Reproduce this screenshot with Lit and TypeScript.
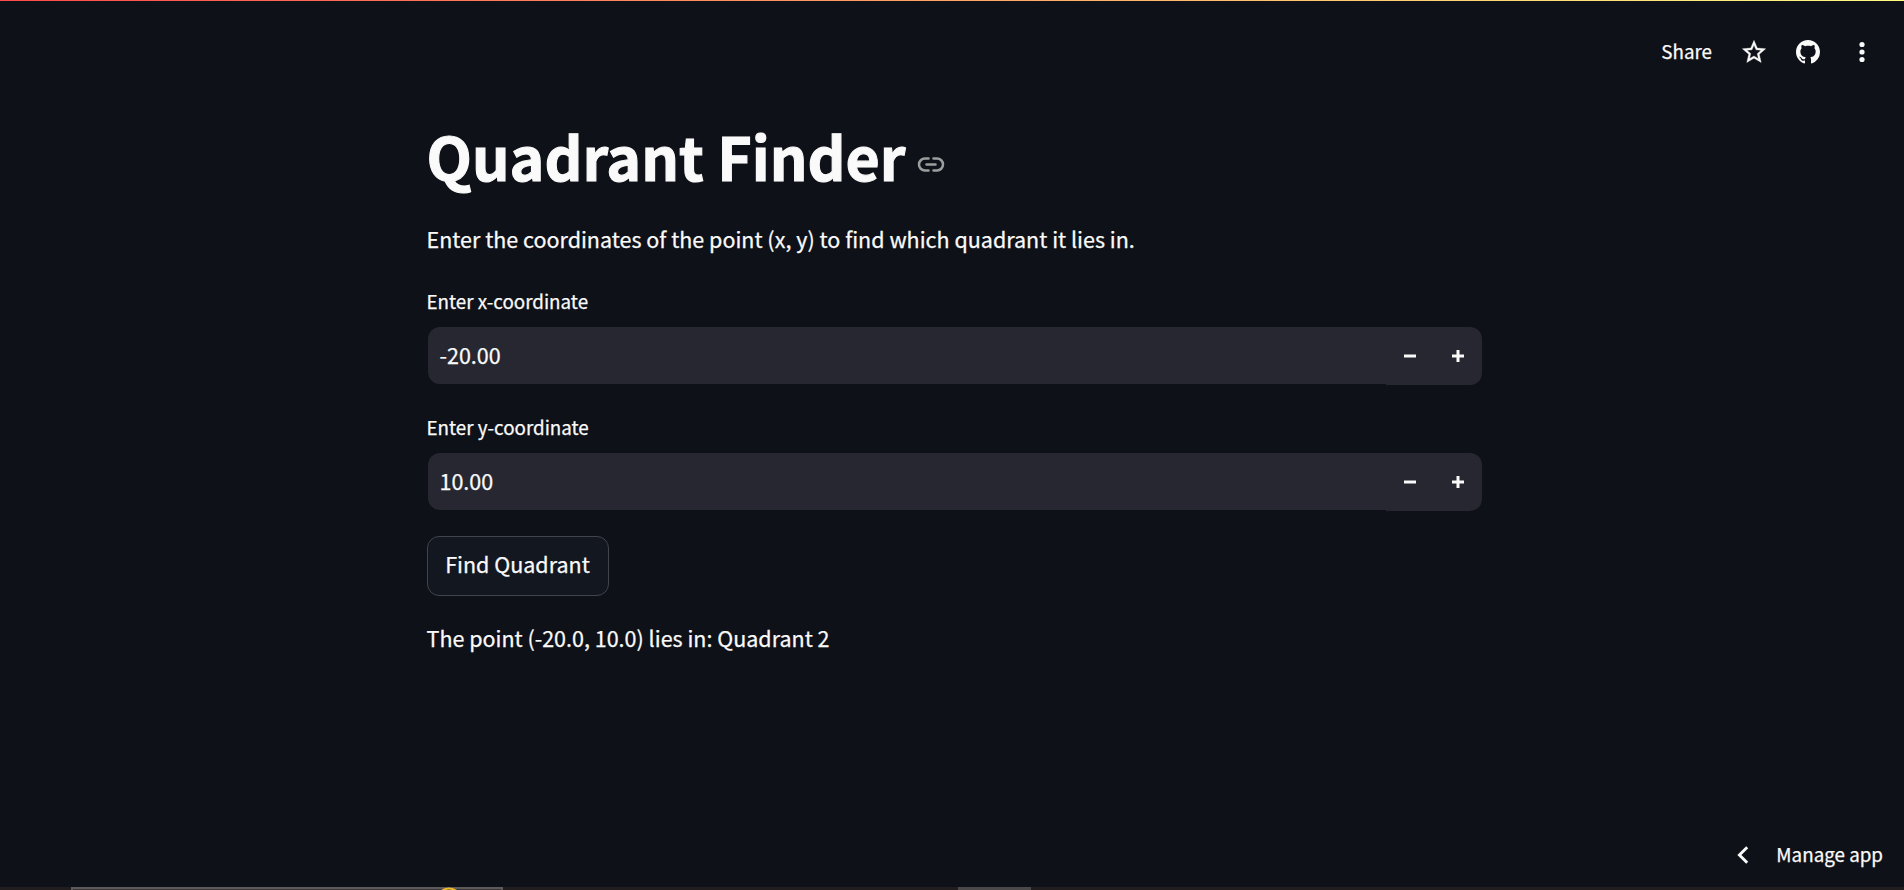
import { LitElement, html, css } from "lit";
import { customElement, property } from "lit/decorators.js";

@customElement("number-field")
class NumberField extends LitElement {
  @property() label = "";
  @property() value = "";

  static styles = css`
    :host { display: block; }
    .label { height: 30px; line-height: 30px; font-size: 18.8px; margin-bottom: 11px; white-space: nowrap; }
    .box { display: flex; align-items: flex-start; height: 58px; margin-left: 1px; }
    .value {
      flex: 1; box-sizing: border-box; height: 57px; line-height: 56px; padding-left: 12px;
      background: #262730; border-radius: 12px 0 0 12px; font-size: 21.5px;
    }
    .steps { display: flex; height: 58px; width: 96px; background: #262730; border-radius: 0 12px 12px 0; }
    .step { width: 48px; height: 58px; display: flex; align-items: center; justify-content: center; }
    .step svg { display: block; }
  `;

  render() {
    return html`
      <div class="label">${this.label}</div>
      <div class="box">
        <div class="value">${this.value}</div>
        <div class="steps">
          <div class="step">
            <svg width="12" height="12" viewBox="0 0 12 12" fill="#fafafa"><path d="M0 4.5h12v3H0z" /></svg>
          </div>
          <div class="step">
            <svg width="12" height="12" viewBox="0 0 12 12" fill="#fafafa"><path d="M4.5 0h3v4.5H12v3H7.5V12h-3V7.5H0v-3h4.5z" /></svg>
          </div>
        </div>
      </div>
    `;
  }
}

@customElement("app-root")
class AppRoot extends LitElement {
  static styles = css`
    :host {
      display: flex; flex-direction: column; height: 890px; width: 100%; overflow: hidden;
      background: #0e1117; color: #fafafa;
      font-family: "Noto Sans CJK JP", "Noto Sans CJK SC", sans-serif;
      -webkit-text-stroke: 0.25px #fafafa;
    }
    .stripe { height: 1px; flex: none; background: linear-gradient(90deg, #ff4b4b, #fffd80); }
    .toolbar {
      flex: none; height: 102px; box-sizing: border-box; padding: 0 28px 0 0;
      display: flex; justify-content: flex-end;
    }
    .share { font-size: 18.8px; line-height: 30px; margin: 35px 28px 0 0; }
    .tool { margin-top: 37px; width: 28px; height: 28px; margin-right: 26px; }
    .tool.last { margin-right: 0; }
    .tool svg { display: block; }
    .main { flex: 1; width: 1055px; margin-left: 426.5px; }
    .heading { display: flex; margin-top: 13px; height: 80px; }
    .title {
      margin: 0; font-size: 59px; line-height: 80px; font-weight: 700; white-space: nowrap;
      -webkit-text-stroke: 1.1px #fafafa;
    }
    .anchor { margin: 34px 0 0 11px; }
    .anchor svg { display: block; }
    .text { margin: 0; height: 38px; line-height: 38px; font-size: 21.5px; white-space: nowrap; }
    .intro { margin-top: 24px; margin-bottom: 28px; }
    .second { margin-top: 27px; }
    .button {
      display: inline-flex; box-sizing: border-box; width: 182px; height: 60px; justify-content: center;
      margin-top: 25px; border: 1px solid #41444c; border-radius: 12px; background: #131720;
      color: inherit; font-size: 21.5px; line-height: 53px; white-space: nowrap;
    }
    .result { margin-top: 23px; }
    .manage { flex: none; display: flex; height: 55px; justify-content: flex-end; padding-right: 21px; }
    .manage svg { display: block; margin: 14px 27px 0 0; }
    .manage .name { font-size: 18.8px; line-height: 30px; margin-top: 7px; }
    .taskbar { flex: none; height: 3px; display: flex; background: #211c1e; }
    .search {
      box-sizing: border-box; margin-left: 71px; width: 432px; height: 3px;
      border: 2px solid #5c5a5b; border-bottom: 0; background: #393536; display: flex;
    }
    .badge { display: block; margin: -2px 0 0 365px; flex: none; }
    .active { margin-left: 455px; width: 73px; background: #4a4849; }
  `;

  render() {
    return html`
      <div class="stripe"></div>
      <div class="toolbar">
        <div class="share">Share</div>
        <div class="tool">
          <svg width="28" height="28" viewBox="0 0 24 24" fill="#fafafa" stroke="#fafafa" stroke-width="0.3">
            <path d="M22 9.24l-7.19-.62L12 2 9.19 8.63 2 9.24l5.46 4.73L5.82 21 12 17.27 18.18 21l-1.63-7.03L22 9.24zM12 15.4l-3.76 2.27 1-4.28-3.32-2.88 4.38-.38L12 6.1l1.71 4.04 4.38.38-3.32 2.88 1 4.28L12 15.4z" />
          </svg>
        </div>
        <div class="tool">
          <svg width="28" height="28" viewBox="0 0 28 28" fill="#fafafa">
            <g transform="translate(2 2) scale(1.5)">
              <path d="M8 0C3.58 0 0 3.58 0 8c0 3.54 2.29 6.53 5.47 7.59.4.07.55-.17.55-.38 0-.19-.01-.82-.01-1.49-2.01.37-2.53-.49-2.69-.94-.09-.23-.48-.94-.82-1.13-.28-.15-.68-.52-.01-.53.63-.01 1.08.58 1.23.82.72 1.21 1.87.87 2.33.66.07-.52.28-.87.51-1.07-1.78-.2-3.64-.89-3.64-3.95 0-.87.31-1.59.82-2.15-.08-.2-.36-1.02.08-2.12 0 0 .67-.21 2.2.82.64-.18 1.32-.27 2-.27s1.36.09 2 .27c1.53-1.04 2.2-.82 2.2-.82.44 1.1.16 1.92.08 2.12.51.56.82 1.27.82 2.15 0 3.07-1.87 3.75-3.65 3.95.29.25.54.73.54 1.48 0 1.07-.01 1.93-.01 2.2 0 .21.15.46.55.38A8.01 8.01 0 0 0 16 8c0-4.42-3.58-8-8-8z" />
            </g>
          </svg>
        </div>
        <div class="tool last">
          <svg width="28" height="28" viewBox="0 0 28 28" fill="#fafafa">
            <circle cx="14" cy="6.5" r="2.6" /><circle cx="14" cy="14" r="2.6" /><circle cx="14" cy="21.5" r="2.6" />
          </svg>
        </div>
      </div>
      <div class="main">
        <div class="heading">
          <h1 class="title">Quadrant Finder</h1>
          <div class="anchor">
            <svg width="30" height="30" viewBox="0 0 30 30" fill="none" stroke="#9c9d9f" stroke-width="2.5" stroke-linecap="round">
              <path d="M12.5 8.5H9a6 6 0 0 0 0 12h3.500M17.500 8.500h3.500a6 6 0 0 1 0 12h-3.500M10.500 14.500h9" />
            </svg>
          </div>
        </div>
        <p class="text intro">Enter the coordinates of the point (x, y) to find which quadrant it lies in.</p>
        <number-field label="Enter x-coordinate" value="-20.00"></number-field>
        <number-field class="second" label="Enter y-coordinate" value="10.00"></number-field>
        <div class="button">Find Quadrant</div>
        <p class="text result">The point (-20.0, 10.0) lies in: Quadrant 2</p>
      </div>
      <div class="manage">
        <svg width="12" height="18" viewBox="0 0 12 18" fill="none" stroke="#fafafa" stroke-width="2.9">
          <path d="M10.2 1.2L2.4 9l7.8 7.8" />
        </svg>
        <div class="name">Manage app</div>
      </div>
      <div class="taskbar">
        <div class="search">
          <svg class="badge" width="22" height="3" viewBox="0 0 22 3"><circle cx="11" cy="14.500" r="13" fill="none" stroke="#f2bd26" stroke-width="2" /></svg>
        </div>
        <div class="active"></div>
      </div>
    `;
  }
}
